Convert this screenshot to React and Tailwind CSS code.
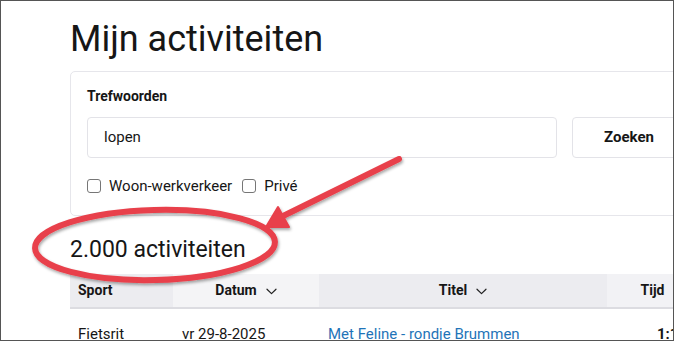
import React from "react"

const Chevron = () => (
  <svg width="11" height="7" viewBox="0 0 11 7" className="ml-[9px] mt-[2px]" fill="none">
    <path d="M1 1.2 L5.5 5.6 L10 1.2" stroke="#222" strokeWidth="1.2" strokeLinecap="round" strokeLinejoin="round" />
  </svg>
)

const HeadCell = ({ label, width, bg, align = "center", sort }) => (
  <div className={`${width} ${bg} h-full flex items-center ${align === "left" ? "justify-start pl-2" : "justify-center"}`}>
    <span className="font-bold text-[14px] text-[#161616]">{label}</span>
    {sort && <Chevron />}
  </div>
)

const Checkbox = ({ label }) => (
  <label className="flex items-center">
    <span className="w-[14px] h-[14px] rounded-[3px] border border-[#767676] bg-white" />
    <span className="ml-[8px] text-[15px] text-[#161616]">{label}</span>
  </label>
)

const Annotation = () => (
  <svg className="absolute inset-0 pointer-events-none" width="674" height="341" viewBox="0 0 674 341">
    <defs>
      <filter id="sh" x="-20%" y="-20%" width="140%" height="140%">
        <feDropShadow dx="1" dy="2" stdDeviation="1.5" floodColor="#000" floodOpacity="0.35" />
      </filter>
    </defs>
    <g filter="url(#sh)">
      <ellipse cx="154" cy="244" rx="120" ry="35" fill="none" stroke="#e8414b" strokeWidth="6" transform="rotate(-1.5 154 244)" />
      <line x1="398" y1="158" x2="278" y2="217" stroke="#e8414b" strokeWidth="6" strokeLinecap="round" />
      <path d="M265 226 L277 206 L288 226 Z" fill="#e8414b" stroke="#e8414b" strokeWidth="2" strokeLinejoin="round" />
    </g>
  </svg>
)

export default function App() {
  return (
    <div className="relative w-[674px] h-[341px] overflow-hidden bg-white border border-[#555] font-['Roboto',sans-serif] text-[#161616]">
      <div className="pl-[69px] pt-[17px] w-[760px]">
        <h1 className="text-[36px] leading-[43px] font-normal">Mijn activiteiten</h1>

        <div className="mt-[10px] border border-[#e6e6eb] rounded-[5px] px-4 pt-[14px] pb-[17px]">
          <div className="text-[14px] font-bold leading-[20px]">Trefwoorden</div>
          <div className="mt-[11px] flex gap-[15px]">
            <div className="w-[470px] h-[41px] border border-[#e3e3e8] rounded-[4px] flex items-center pl-4 text-[15px]">
              lopen
            </div>
            <div className="w-[114px] h-[41px] border border-[#e3e3e8] rounded-[4px] flex items-center justify-center font-bold text-[15px]">
              Zoeken
            </div>
          </div>
          <div className="mt-[17px] flex items-center gap-[10px]">
            <Checkbox label="Woon-werkverkeer" />
            <Checkbox label="Privé" />
          </div>
        </div>

        <div className="mt-[18px] text-[23px] leading-[32px]">2.000 activiteiten</div>

        <div className="mt-[8px] flex h-[35px] border-b-2 border-[#dcdce1]">
          <HeadCell label="Sport" width="w-[103px]" bg="bg-[#ececf0]" align="left" />
          <HeadCell label="Datum" width="w-[146px]" bg="bg-[#f4f4f6]" sort />
          <HeadCell label="Titel" width="w-[288px]" bg="bg-[#ececf0]" sort />
          <HeadCell label="Tijd" width="w-[111px]" bg="bg-[#f2f2f5]" sort />
        </div>

        <div className="flex pt-[14px] text-[15px] leading-[22px]">
          <div className="w-[103px] pl-2">Fietsrit</div>
          <div className="w-[146px] pl-[9px]">vr 29-8-2025</div>
          <div className="w-[288px] pl-[9px] text-[#1f74b8]">Met Feline - rondje Brummen</div>
          <div className="w-[111px] pl-[50px] font-bold">1:12:30</div>
        </div>
      </div>
      <Annotation />
    </div>
  )
}
